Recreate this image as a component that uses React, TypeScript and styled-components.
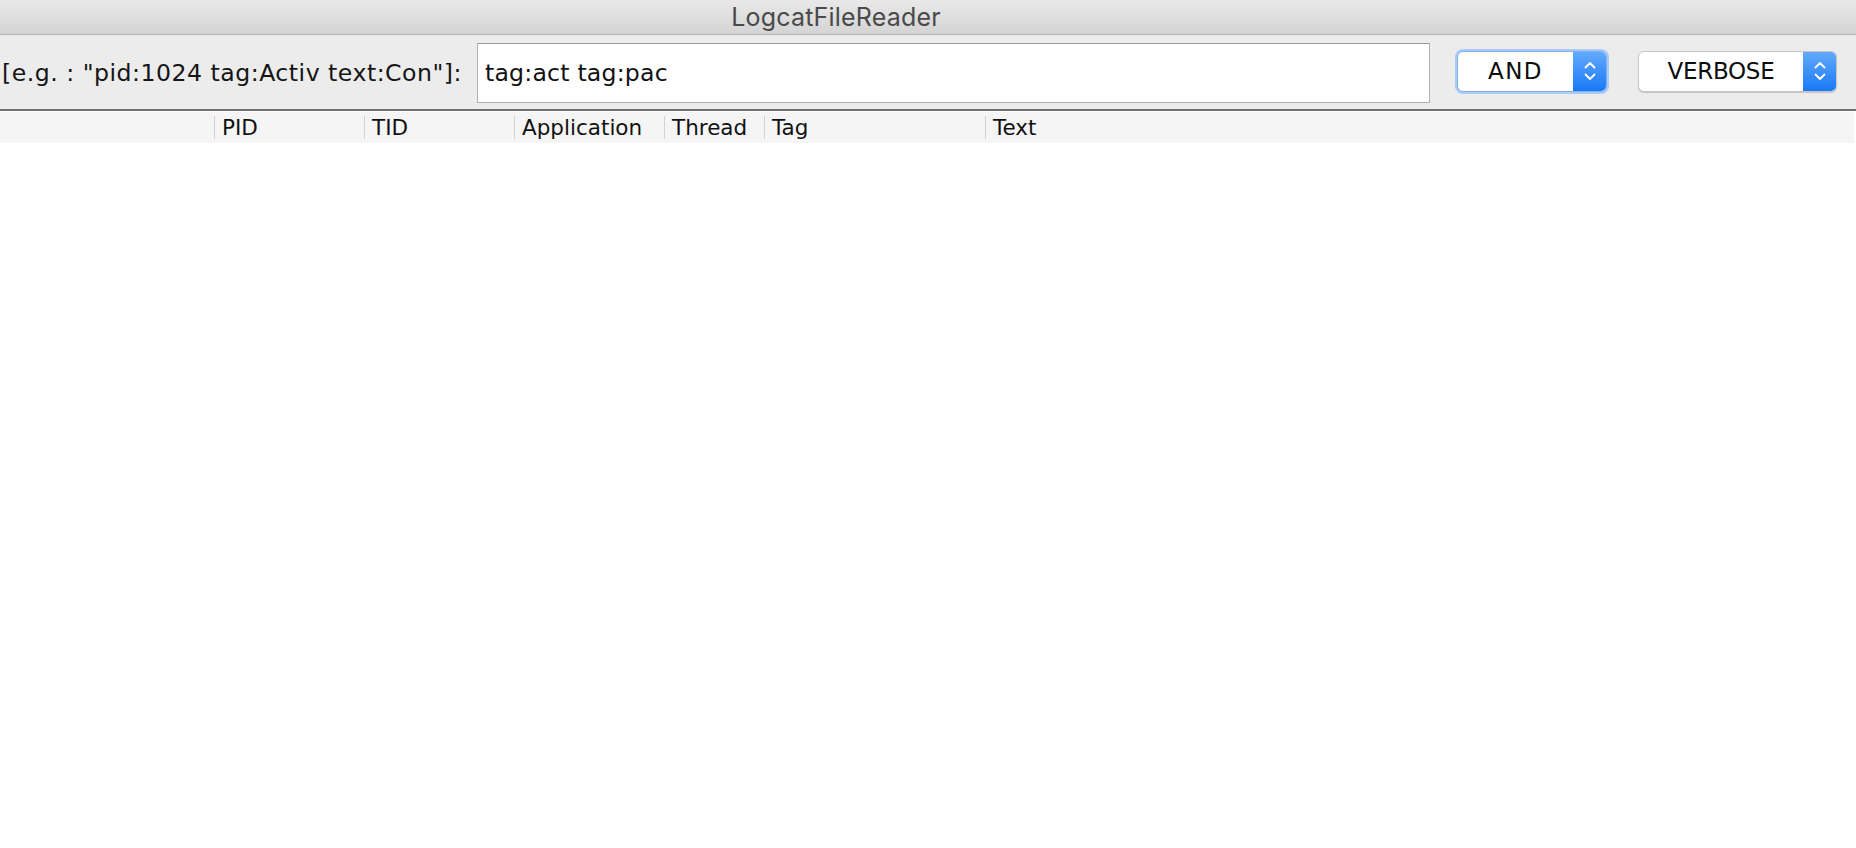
import styled, { createGlobalStyle } from 'styled-components'

const GlobalStyle = createGlobalStyle`
  html, body {
    margin: 0;
    padding: 0;
    background: #ffffff;
  }
  body {
    font-family: 'DejaVu Sans', 'Liberation Sans', sans-serif;
    color: #111;
    overflow: hidden;
  }
`;

const Window = styled.div`
  width: 1856px;
  height: 848px;
  display: flex;
  flex-direction: column;
  background: #ffffff;
`;

const TitleBar = styled.div`
  height: 34px;
  display: flex;
  align-items: center;
  justify-content: center;
  padding-right: 184px;
  background: linear-gradient(#e9e9e9, #d4d4d4);
  border-bottom: 1px solid #b3b3b3;
  font-family: 'Inter', 'Open Sans', sans-serif;
  font-size: 25px;
  letter-spacing: 0.2px;
  color: #4a4a4a;
`;

const Toolbar = styled.div`
  height: 74px;
  display: flex;
  align-items: center;
  background: #ececec;
  border-bottom: 2px solid #6f6f6f;
`;

const FilterLabel = styled.span`
  padding-left: 2px;
  font-size: 23.6px;
  letter-spacing: 0.5px;
  white-space: nowrap;
  width: 475px;
  color: #151515;
  margin-top: 2px;
`;

const FilterInput = styled.div`
  width: 953px;
  height: 60px;
  box-sizing: border-box;
  display: flex;
  align-items: center;
  padding-left: 7px;
  background: #ffffff;
  border: 1px solid #b0b0b0;
  border-top-color: #9c9c9c;
  font-size: 23.6px;
  letter-spacing: 0.2px;
  color: #111;
  margin-top: 2px;
`;

const Select = styled.div<{ $width: number; $focused?: boolean; $gap: number }>`
  width: ${(p) => p.$width}px;
  height: 41px;
  margin-left: ${(p) => p.$gap}px;
  box-sizing: border-box;
  display: flex;
  border-radius: 6px;
  background: #ffffff;
  border: 1px solid ${(p) => (p.$focused ? '#7fb0ee' : '#c6c6c6')};
  box-shadow: ${(p) =>
    p.$focused
      ? '0 0 0 2px #a9cbf5'
      : '0 1px 1px rgba(0,0,0,0.18)'};
  overflow: hidden;
  margin-top: -2px;
`;

const SelectText = styled.div<{ $spacing?: number }>`
  flex: 1;
  display: flex;
  align-items: center;
  justify-content: center;
  font-size: 23px;
  color: #0d0d0d;
  letter-spacing: ${(p) => p.$spacing ?? -0.3}px;
`;

const SelectArrow = styled.div`
  width: 33px;
  display: flex;
  align-items: center;
  justify-content: center;
  background: linear-gradient(#62aafd, #1a78f7);
`;

const HeaderRow = styled.div`
  width: 1854px;
  height: 31px;
  margin-top: 1px;
  display: flex;
  align-items: center;
  background: #f5f5f5;
`;

const HeaderCell = styled.div<{ $width?: number; $first?: boolean }>`
  ${(p) => (p.$width ? `width: ${p.$width}px;` : 'flex: 1;')}
  height: 23px;
  box-sizing: border-box;
  display: flex;
  align-items: center;
  padding-left: 7px;
  border-left: ${(p) => (p.$first ? 'none' : '1px solid #d2d2d2')};
  font-size: 21.5px;
  color: #111;
  white-space: nowrap;
  overflow: hidden;
`;

const Chevrons = () => (
  <svg width="16" height="26" viewBox="0 0 16 26" fill="none">
    <path d="M3.5 9.5 L8 5 L12.5 9.5" stroke="#fff" strokeWidth="1.8" strokeLinecap="round" strokeLinejoin="round" />
    <path d="M3.5 16.5 L8 21 L12.5 16.5" stroke="#fff" strokeWidth="1.8" strokeLinecap="round" strokeLinejoin="round" />
  </svg>
);

const columns = [
  { name: '', width: 214 },
  { name: 'PID', width: 150 },
  { name: 'TID', width: 150 },
  { name: 'Application', width: 150 },
  { name: 'Thread', width: 100 },
  { name: 'Tag', width: 221 },
  { name: 'Text' },
];

const App = () => {
  return (
    <Window>
      <GlobalStyle />
      <TitleBar>LogcatFileReader</TitleBar>
      <Toolbar>
        <FilterLabel>[e.g. : "pid:1024 tag:Activ text:Con"]:</FilterLabel>
        <FilterInput>tag:act tag:pac</FilterInput>
        <Select $width={150} $gap={27} $focused>
          <SelectText $spacing={1.5}>AND</SelectText>
          <SelectArrow>
            <Chevrons />
          </SelectArrow>
        </Select>
        <Select $width={199} $gap={31}>
          <SelectText>VERBOSE</SelectText>
          <SelectArrow>
            <Chevrons />
          </SelectArrow>
        </Select>
      </Toolbar>
      <HeaderRow>
        {columns.map((col, i) => (
          <HeaderCell key={i} $width={col.width} $first={i === 0}>
            {col.name}
          </HeaderCell>
        ))}
      </HeaderRow>
    </Window>
  );
};

export default App;
